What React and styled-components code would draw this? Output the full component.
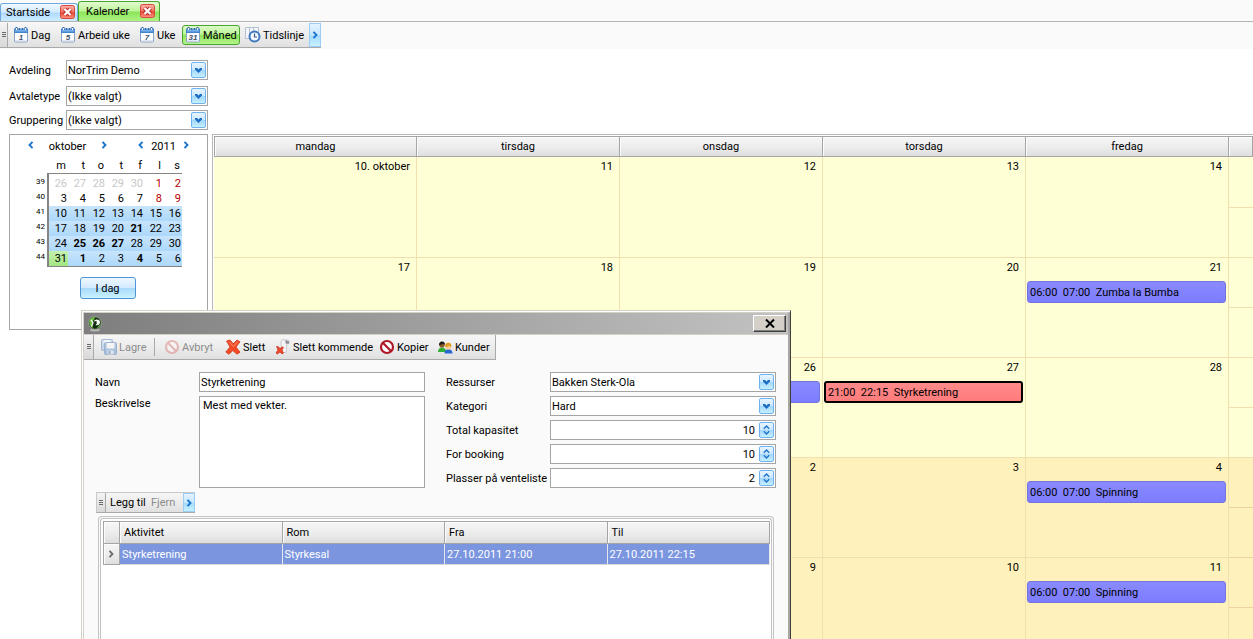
import React from "react";
import styled, { createGlobalStyle } from "styled-components";

const Global = createGlobalStyle`
  *, *::before, *::after { box-sizing: border-box; }
  html, body { margin: 0; background: #fff; }
  body, button, input, select, textarea, table {
    font-family: Roboto, "Liberation Sans", sans-serif;
    font-size: 11px;
    line-height: 15px;
    color: #000;
  }
  button { padding: 0; margin: 0; border: 0; background: none; white-space: nowrap; }
`;

const Page = styled.div`
  position: relative;
  height: 100vh;
  overflow: hidden;
  display: flex;
  flex-direction: column;
`;

/* ---------- tabs ---------- */
const TopArea = styled.header`
  background: #fafafa;
  height: 49px;
  flex: none;
`;
const TabStrip = styled.nav`
  display: flex;
  align-items: flex-end;
  height: 22px;
  border-bottom: 1px solid #b4b4b4;
`;
const Tab = styled.div`
  display: flex;
  align-items: center;
  justify-content: space-between;
  width: ${(p) => (p.$active ? "82px" : "78px")};
  height: ${(p) => (p.$active ? "20px" : "18px")};
  padding: ${(p) => (p.$active ? "0 4px 0 7px" : "0 2px 0 5px")};
  border: 1px solid ${(p) => (p.$active ? "#4aa52e" : "#6fa8dc")};
  border-bottom: 0;
  border-radius: 3px 3px 0 0;
  background: ${(p) =>
    p.$active
      ? "linear-gradient(#e2fbd0 0%, #bdf598 48%, #8ce45a 52%, #aef382 100%)"
      : "linear-gradient(#f2f9ff 0%, #d3eaff 45%, #b0dafc 55%, #cdeeff 100%)"};
`;
const TabClose = styled.button`
  display: flex;
  width: 15px;
  height: 15px;
`;

/* ---------- toolbars ---------- */
const Toolbar = styled.div`
  display: flex;
  align-items: stretch;
  width: max-content;
  height: ${(p) => p.$height || 25}px;
  border-right: 1px solid #a9a9a9;
  border-bottom: 1px solid #a9a9a9;
  background: linear-gradient(#f6f6f6 0%, #ececec 50%, #e0e0e0 100%);
`;
const MainToolbar = styled(Toolbar)`
  margin-top: 1px;
  border-right: 0;
`;
const Grip = styled.span`
  display: flex;
  align-items: center;
  justify-content: center;
  width: ${(p) => p.$width || 10}px;
  border-right: 1px solid #a9a9a9;
  background: linear-gradient(#f4f4f4, #d8d8d8);
`;
const ToolItems = styled.div`
  display: flex;
  align-items: center;
  gap: 2px;
  padding: 0 ${(p) => p.$pad}px;
`;
const ToolButton = styled.button`
  display: flex;
  align-items: center;
  gap: 2px;
  width: ${(p) => p.$width}px;
  height: 20px;
  padding-left: 2px;
  border: 1px solid ${(p) => (p.$active ? "#4aa52e" : "transparent")};
  border-radius: 3px;
  background: ${(p) =>
    p.$active ? "linear-gradient(#dcfac8 0%, #bdf598 45%, #8fe45e 52%, #b4f58c 100%)" : "none"};
  color: ${(p) => (p.disabled ? "#8c8c8c" : "#000")};
  svg { flex: none; opacity: ${(p) => (p.disabled ? 0.4 : 1)}; }
`;
const ToolSeparator = styled.span`
  width: 1px;
  height: 18px;
  margin-right: 4px;
  background: #a9a9a9;
`;
const MoreButton = styled.button`
  display: flex;
  align-items: center;
  justify-content: center;
  width: 12px;
  border: 1px solid #9ccdf6;
  background: linear-gradient(#e4f4ff 0%, #c6e6ff 50%, #a4dafd 54%, #c8f2ff 100%);
`;

/* ---------- form fields ---------- */
const FieldRow = styled.div`
  display: grid;
  grid-template-columns: ${(p) => p.$label}px 1fr;
  align-items: ${(p) => (p.$top ? "start" : "center")};
`;
const Label = styled.label`
  white-space: nowrap;
`;
const Control = styled.div`
  display: grid;
  grid-template-columns: 1fr 16px;
  align-items: center;
  height: 20px;
  border: 1px solid #a5a5a5;
  background: #fff;
`;
const fieldText = `
  grid-row: 1;
  width: 100%;
  height: 18px;
  margin: 0;
  padding: 1px 1px 0;
  border: 0;
  border-radius: 0;
  outline: 0;
  background: transparent;
  appearance: none;
`;
const Select = styled.select`
  ${fieldText}
  grid-column: 1 / 3;
`;
const NumberInput = styled.input`
  ${fieldText}
  grid-column: 1;
  padding-right: 4px;
  text-align: right;
  appearance: textfield;
  &::-webkit-inner-spin-button { display: none; }
`;
const FieldButton = styled.span`
  display: flex;
  align-items: center;
  justify-content: center;
  grid-row: 1;
  grid-column: 2;
  width: 15px;
  height: 16px;
  border: 1px solid #6fb2ee;
  border-radius: 2px;
  background: linear-gradient(#e8f5ff 0%, #cde7ff 48%, #a5d7fb 52%, #c6f0ff 100%);
  pointer-events: none;
`;
const TextInput = styled.input`
  width: 100%;
  height: 20px;
  padding: 0 1px;
  border: 1px solid #a5a5a5;
  border-radius: 0;
`;
const TextArea = styled.textarea`
  display: block;
  width: 100%;
  height: 92px;
  padding: 1px 3px;
  border: 1px solid #a5a5a5;
  resize: none;
`;

/* ---------- body ---------- */
const Main = styled.main`
  display: grid;
  grid-template-columns: 199px 1fr;
  gap: 4px;
  flex: 1;
  min-height: 0;
  padding-left: 9px;
`;
const Sidebar = styled.aside`
  padding-top: 11px;
`;
const Filters = styled.div`
  display: grid;
  gap: 4px;
`;
const FirstFilter = styled.div`
  padding-bottom: 2px;
`;
const DatePanel = styled.section`
  display: flex;
  flex-direction: column;
  align-items: center;
  height: 196px;
  margin-top: 4px;
  border: 1px solid #a5a5a5;
`;
const MonthNav = styled.div`
  display: flex;
  align-items: center;
  justify-content: space-between;
  width: 164px;
  height: 22px;
`;
const NavGroup = styled.div`
  display: flex;
  align-items: center;
  justify-content: space-between;
  width: ${(p) => p.$width}px;
`;
const NavButton = styled.button`
  display: flex;
  width: 8px;
  height: 10px;
`;
const MonthTable = styled.table`
  width: 156px;
  margin-right: 9px;
  border-collapse: separate;
  border-spacing: 0;
  table-layout: fixed;
  th, td { padding: 0; height: 15px; text-align: right; font-weight: 400; }
  thead th { height: 16px; padding-right: 2px; }
  thead th:first-child { width: 23px; }
`;
const WeekNo = styled.th`
  && {
    padding: ${(p) => (p.$first ? "4px" : "1px")} 2px 0 0;
    font-size: 8px;
    line-height: 10px;
    vertical-align: top;
    border-right: 2px solid #858585;
  }
`;
const Day = styled.td`
  && {
    height: ${(p) => (p.$first ? 18 : p.$last ? 16 : 15)}px;
    padding: ${(p) => (p.$first ? "2px" : "0")} 1px 0 0;
    color: ${(p) => (p.$kind === "out" ? "#c8c8c8" : p.$kind === "red" ? "#b80000" : "#000")};
    font-weight: ${(p) => (p.$bold ? 700 : 400)};
    background: ${(p) =>
      p.$kind === "today"
        ? "linear-gradient(#c6f0b0, #a2e682)"
        : p.$kind === "sel"
          ? "linear-gradient(#c8e4fc, #acd8fa)"
          : "none"};
    border-top: ${(p) => (p.$first ? "1px solid #858585" : "0")};
    border-bottom: ${(p) => (p.$last ? "1px solid #858585" : "0")};
  }
`;
const TodayButton = styled.button`
  width: 56px;
  height: 22px;
  margin: 10px 2px 0 0;
  border: 1px solid #4f95d8;
  border-radius: 3px;
  background: linear-gradient(#eef8ff 0%, #d3eaff 48%, #a9dafc 52%, #cbf3ff 100%);
`;

/* ---------- month view ---------- */
const MonthView = styled.section`
  margin-top: 85px;
  padding: 1px 0 0 1px;
  border-top: 1px solid #b8b8b8;
  border-left: 1px solid #b8b8b8;
`;
const WeekGrid = styled.div`
  display: grid;
  grid-template-columns: repeat(5, minmax(0, 1fr)) 24px;
`;
const DayHeader = styled.div`
  height: 21px;
  padding-top: 2px;
  text-align: center;
  border: 1px solid #a5a5a5;
  border-left-width: 0;
  box-shadow: inset 1px 1px #fcfcfc;
  background: linear-gradient(#f6f6f6 0%, #ececec 55%, #dedede 100%);
  &:first-child { border-left-width: 1px; }
`;
const DayCell = styled.div`
  height: ${(p) => (p.$tall ? 101 : 100)}px;
  padding: 2px 2px 0 1px;
  border-right: 1px solid #f2dfb0;
  border-bottom: 1px solid #f2dfb0;
  background: ${(p) => (p.$next ? "#fff1bb" : "#ffffd6")};
`;
const DayNumber = styled.div`
  padding-right: 4px;
  text-align: right;
`;
const Weekend = styled.div`
  display: grid;
  grid-template-rows: ${(p) => (p.$tall ? 51 : 50)}px 50px;
  div {
    border-bottom: 1px solid ${(p) => (p.$next ? "#ecd49c" : "#f2dfb0")};
    background: ${(p) => (p.$next ? "#fff1bb" : "#ffffd6")};
  }
`;
const EventCard = styled.button`
  display: block;
  width: 100%;
  height: 22px;
  margin-top: 6px;
  padding: 0 2px;
  text-align: left;
  white-space: pre;
  border: ${(p) => (p.$selected ? "2px solid #000" : "1px solid #7474e0")};
  border-radius: 3px;
  background: ${(p) =>
    p.$selected ? "linear-gradient(#ff8a8a, #ff7b7b)" : "linear-gradient(#8a8aff, #7c7cff)"};
`;

/* ---------- dialog ---------- */
const Dialog = styled.section`
  position: absolute;
  top: 310px;
  bottom: 0;
  left: 81px;
  width: 710px;
  display: flex;
  flex-direction: column;
  padding: 1px 0 0 1px;
  border-top: 1px solid #d4d0c8;
  border-left: 1px solid #d4d0c8;
  border-right: 1px solid #404040;
  background: #fff;
`;
const DialogFrame = styled.div`
  display: flex;
  flex-direction: column;
  flex: 1;
  min-height: 0;
  border-top: 1px solid #d4d0c8;
  border-left: 1px solid #d4d0c8;
  border-right: 2px solid #a8a6a0;
  background: #fafafa;
`;
const TitleBar = styled.header`
  display: flex;
  align-items: center;
  justify-content: space-between;
  flex: none;
  height: 22px;
  padding: 0 2px 0 4px;
  border-bottom: 1px solid #d4d0c8;
  background: linear-gradient(90deg, #7e7e7e, #c2c2c2);
`;
const CloseButton = styled.button`
  display: flex;
  align-items: center;
  justify-content: center;
  width: 33px;
  height: 17px;
  border: 1px solid #fff;
  border-right-color: #404040;
  border-bottom-color: #404040;
  box-shadow: inset -1px -1px #808080;
  background: #d4d0c8;
`;
const FormGrid = styled.div`
  display: grid;
  grid-template-columns: 330px 330px;
  column-gap: 21px;
  align-items: start;
  padding: 12px 0 0 11px;
`;
const FormColumn = styled.div`
  display: grid;
  gap: 4px;
`;
const SmallToolbar = styled(Toolbar)`
  flex: none;
  margin: 4px 0 0 12px;
  border-top: 1px solid #c8c8c8;
  border-left: 1px solid #c8c8c8;
  border-right: 0;
`;
const GridOuter = styled.div`
  flex: 1;
  min-height: 0;
  overflow: hidden;
  margin: 3px 14px 0;
  padding: 1px 1px 0;
  border: 1px solid #c4c4c4;
  border-bottom: 0;
  border-radius: 4px 4px 0 0;
`;
const GridInner = styled.div`
  height: 100%;
  padding: 2px 1px 0 2px;
  border: 1px solid #c4c4c4;
  border-bottom: 0;
  border-radius: 3px 3px 0 0;
  background: #fff;
`;
const ActivityTable = styled.table`
  width: 100%;
  border-collapse: separate;
  border-spacing: 0;
  table-layout: fixed;
  border-top: 1px solid #a5a5a5;
  border-left: 1px solid #a5a5a5;
  th {
    height: 22px;
    padding: 0 4px;
    text-align: left;
    font-weight: 400;
    border-right: 1px solid #a5a5a5;
    border-bottom: 1px solid #a5a5a5;
    box-shadow: inset 1px 1px #fcfcfc;
    background: linear-gradient(#f6f6f6 0%, #ececec 55%, #dedede 100%);
  }
  th:first-child { width: 16px; padding: 0 3px; }
  tbody th { height: 21px; }
  td {
    height: 21px;
    padding: 0 2px;
    color: #fff;
    background: #7b96df;
    border-right: 1px solid #e8e8e8;
    border-bottom: 1px solid #d8d8d8;
  }
`;

/* ---------- icons ---------- */
const Chevron = ({ left, color = "#1a74cc", size = 8 }) => (
  <svg width={size} height={size} viewBox="0 0 8 8" fill="none" stroke={color} strokeWidth="1.9">
    <path d={left ? "M5.5.8 2.500 4l3 3.200" : "M2.500.8l3 3.200-3 3.200"} />
  </svg>
);
const DropIcon = () => (
  <svg width="7" height="5" viewBox="0 0 7 5">
    <path d="M0 0h2l1.500 1.500L5 0h2v1.500L3.500 5 0 1.500z" fill="#1a6fc4" />
  </svg>
);
const SpinIcon = () => (
  <svg width="7" height="10" viewBox="0 0 7 10" fill="none" stroke="#1a74cc" strokeWidth="1.4">
    <path d="M.8 3.700 3.500 1l2.700 2.700M.8 6.300 3.500 9l2.700-2.700" />
  </svg>
);
const GripIcon = () => (
  <svg width="4" height="8" viewBox="0 0 4 8" stroke="#6a6a6a">
    <path d="M0 1.500h4M0 3.500h4M0 5.500h4" />
  </svg>
);
const RedCloseIcon = () => (
  <svg width="15" height="15" viewBox="0 0 15 15">
    <defs>
      <linearGradient id="redClose" x1="0" y1="0" x2="0" y2="1">
        <stop offset="0" stopColor="#ffb4a8" />
        <stop offset=".5" stopColor="#f07868" />
        <stop offset=".55" stopColor="#e84434" />
        <stop offset="1" stopColor="#ff9880" />
      </linearGradient>
    </defs>
    <rect x=".5" y=".5" width="14" height="13" rx="2" fill="url(#redClose)" stroke="#d84840" />
    <path d="M4.500 4l6 6M10.500 4l-6 6" stroke="#b03028" strokeWidth="4" />
    <path d="M4.500 4l6 6M10.500 4l-6 6" stroke="#fff" strokeWidth="2.200" />
  </svg>
);
const CalendarIcon = ({ day }) => (
  <svg width="16" height="16" viewBox="0 0 16 16">
    <rect x="1.500" y="2.500" width="13" height="12.500" rx="1" fill="#fff" stroke="#8aa4c8" />
    <path d="M1 1.500h14V6H1z" fill="#4484cc" />
    <path d="M2 2.500h12v2H2z" fill="#78b0ec" />
    <path d="M2.500 0h2v3h-2zM11.500 0h2v3h-2z" fill="#3868a8" />
    <path d="M3 1h1v2H3zM12 1h1v2h-1z" fill="#fff" />
    <path d="M6.500 1v2M9.500 1v2" stroke="#3868a8" />
    <path d="M2 14h12" stroke="#c4d2e4" />
    <text x="8" y="13" textAnchor="middle" fontSize="8" fontWeight="700" fontStyle="italic" fontFamily="Liberation Sans" fill="#44546c">
      {day}
    </text>
  </svg>
);
const TimelineIcon = () => (
  <svg width="16" height="16" viewBox="0 0 16 16">
    <path d="M.5.5h13v11H.5z" fill="#f2f5f9" stroke="#b4c2d2" />
    <path d="M4.500 1v10M8.500 1v5" stroke="#b4c2d2" />
    <circle cx="9.500" cy="9.500" r="5" fill="#f4f9ff" stroke="#3f78bd" strokeWidth="2" />
    <path d="M9.500 6.500v3.500h2.500" fill="none" stroke="#3f5f88" strokeWidth="1.200" />
  </svg>
);
const SaveIcon = () => (
  <svg width="16" height="16" viewBox="0 0 16 16">
    <rect x=".5" y=".5" width="11" height="11" rx="1" fill="#8cb6e4" stroke="#3468ac" />
    <rect x="2.500" y="1" width="7" height="4" fill="#fff" />
    <rect x="3.500" y="3.500" width="12" height="12" rx="1" fill="#4c88d4" stroke="#2c5c9c" />
    <rect x="5.500" y="4" width="8" height="5.500" fill="#fff" />
    <rect x="6.500" y="11.500" width="6" height="4" fill="#d8e4f2" />
    <rect x="7.500" y="12" width="2" height="3" fill="#2c5c9c" />
  </svg>
);
const ForbidIcon = ({ soft }) => (
  <svg width="16" height="16" viewBox="0 0 16 16" fill="none" stroke={soft ? "#d86868" : "#b01828"} strokeWidth="2.200">
    <circle cx="8" cy="8" r="6" fill="#fff" />
    <path d="M3.800 3.800l8.400 8.400" />
  </svg>
);
const DeleteIcon = () => (
  <svg width="16" height="16" viewBox="0 0 16 16">
    <path d="M1.500 2 5 1l3.200 3.800L12 1l3 1.800L11 8l4 5.200-3 2L7.800 11.500 4 15.300.8 13 5 8z" fill="#f44a28" stroke="#d03818" strokeWidth=".8" />
    <path d="M4 2.800 8.500 7.500 12.500 2.800" fill="none" stroke="#ff8c6c" strokeWidth="1" />
  </svg>
);
const DeleteNextIcon = () => (
  <svg width="16" height="16" viewBox="0 0 16 16">
    <path d="M6 2.500C6 1 7.500.5 9 .8l4 .4c1.500 0 1.800 2 .8 3l-2-.4-.6 9.500-4.700.7z" fill="#f4f4f4" stroke="#c0c0c0" strokeWidth=".8" />
    <path d="M10.500 1v3.500l3.500.2V2.500z" fill="#8a9098" />
    <path d="M1.500 7.500l2 .3 1.500 2 2-2 1.500.7L7 11l1.500 3L7 15l-2-2-2.500 2L1 14l2-3z" fill="#f04828" stroke="#b82010" strokeWidth=".6" />
  </svg>
);
const PeopleIcon = () => (
  <svg width="16" height="16" viewBox="0 0 16 16">
    <path d="M1 13c0-3 1.500-4.500 4-4.500S9 10 9 13z" fill="#30b038" />
    <circle cx="5" cy="6" r="2.600" fill="#8a5a28" />
    <path d="M2.200 6.500C1.700 3.500 3.300 2.500 5.200 2.500S8.300 4 7.800 6L6 4.800z" fill="#201c18" />
    <path d="M7.500 14.500c0-2.700 1.300-4.200 3.900-4.200s4.100 1.500 4.100 4.200z" fill="#2868d0" />
    <circle cx="11.300" cy="8" r="2.600" fill="#fcc890" />
    <path d="M8.500 8.500C7.700 5 9.300 3.800 11.400 3.800s3.700 1.700 2.800 4.700L12.500 6.500z" fill="#e09a20" />
  </svg>
);
const AppIcon = () => (
  <svg width="14" height="16" viewBox="0 0 14 16">
    <ellipse cx="7" cy="14" rx="5" ry="1.600" fill="#b4b4b4" />
    <circle cx="7" cy="7" r="6.300" fill="#142c10" stroke="#a8b8a0" strokeWidth=".8" />
    <path d="M1.500 4.500C3 2 5 1 7.500 1.200L4 6.500l1 5.500C2.500 11 .8 8 1.500 4.500z" fill="#6cc440" />
    <path d="M8.500 12c2-.4 3.600-1.800 4-4l-2 2z" fill="#6cc440" />
    <path d="M3 4l2 2.500-1.500 4" fill="none" stroke="#f2f8ee" strokeWidth="1.300" />
    <path d="M6 5c1.500-2.200 5.500-2 6 .8s-2 4-4.500 3.200L9 7.500z" fill="#f4faf0" />
    <circle cx="7.800" cy="6" r="1" fill="#142c10" />
  </svg>
);
const CrossIcon = () => (
  <svg width="10" height="9" viewBox="0 0 10 9" stroke="#000" strokeWidth="2">
    <path d="M1 .5l8 8M9 .5l-8 8" />
  </svg>
);

/* ---------- data ---------- */
const filters = [
  { id: "avdeling", label: "Avdeling", value: "NorTrim Demo" },
  { id: "avtaletype", label: "Avtaletype", value: "(Ikke valgt)" },
  { id: "gruppering", label: "Gruppering", value: "(Ikke valgt)" },
];
const miniWeeks = [
  [39, [26, 27, 28, 29, 30, 1, 2]],
  [40, [3, 4, 5, 6, 7, 8, 9]],
  [41, [10, 11, 12, 13, 14, 15, 16]],
  [42, [17, 18, 19, 20, 21, 22, 23]],
  [43, [24, 25, 26, 27, 28, 29, 30]],
  [44, [31, 1, 2, 3, 4, 5, 6]],
];
const boldDays = ["3-4", "4-1", "4-2", "4-3", "5-1", "5-4"];
const dayKind = (w, d) => {
  if (w === 0 && d < 5) return "out";
  if (w < 2) return d > 4 ? "red" : "plain";
  return w === 5 && d === 0 ? "today" : "sel";
};
const dayNames = ["mandag", "tirsdag", "onsdag", "torsdag", "fredag"];
const spinning = { text: "06:00  07:00  Spinning" };
const weeks = [
  [{ n: "10. oktober" }, { n: 11 }, { n: 12 }, { n: 13 }, { n: 14 }],
  [{ n: 17 }, { n: 18 }, { n: 19 }, { n: 20 }, { n: 21, event: { text: "06:00  07:00  Zumba la Bumba" } }],
  [
    { n: 24 },
    { n: 25 },
    { n: 26, event: spinning },
    { n: 27, event: { text: "21:00  22:15  Styrketrening", selected: true } },
    { n: 28 },
  ],
  [{ n: 31 }, { n: "1. november", next: true }, { n: 2, next: true }, { n: 3, next: true }, { n: 4, next: true, event: spinning }],
  [{ n: 7, next: true }, { n: 8, next: true }, { n: 9, next: true }, { n: 10, next: true }, { n: 11, next: true, event: spinning }],
];

const Dropdown = ({ id, value }) => (
  <Control>
    <Select id={id} defaultValue={value}>
      <option>{value}</option>
    </Select>
    <FieldButton><DropIcon /></FieldButton>
  </Control>
);
const Spinner = ({ id, value }) => (
  <Control>
    <NumberInput id={id} type="number" defaultValue={value} />
    <FieldButton><SpinIcon /></FieldButton>
  </Control>
);
const Filter = ({ id, label, value }) => (
  <FieldRow $label={57}>
    <Label htmlFor={id}>{label}</Label>
    <Dropdown id={id} value={value} />
  </FieldRow>
);

export default function App() {
  return (
    <Page>
      <Global />
      <TopArea>
        <TabStrip>
          <Tab>
            Startside
            <TabClose aria-label="Lukk Startside"><RedCloseIcon /></TabClose>
          </Tab>
          <Tab $active>
            Kalender
            <TabClose aria-label="Lukk Kalender"><RedCloseIcon /></TabClose>
          </Tab>
        </TabStrip>
        <MainToolbar>
          <Grip $width={8}><GripIcon /></Grip>
          <ToolItems $pad={2}>
            <ToolButton $width={45}><CalendarIcon day="1" />Dag</ToolButton>
            <ToolButton $width={77}><CalendarIcon day="5" />Arbeid uke</ToolButton>
            <ToolButton $width={44}><CalendarIcon day="7" />Uke</ToolButton>
            <ToolButton $width={58} $active><CalendarIcon day="31" />Måned</ToolButton>
            <ToolButton $width={65}><TimelineIcon />Tidslinje</ToolButton>
          </ToolItems>
          <MoreButton aria-label="Flere"><Chevron /></MoreButton>
        </MainToolbar>
      </TopArea>

      <Main>
        <Sidebar>
          <Filters>
            <FirstFilter><Filter {...filters[0]} /></FirstFilter>
            <Filter {...filters[1]} />
            <Filter {...filters[2]} />
          </Filters>
          <DatePanel>
            <MonthNav>
              <NavGroup $width={82}>
                <NavButton aria-label="Forrige måned"><Chevron left /></NavButton>
                oktober
                <NavButton aria-label="Neste måned"><Chevron /></NavButton>
              </NavGroup>
              <NavGroup $width={54}>
                <NavButton aria-label="Forrige år"><Chevron left /></NavButton>
                2011
                <NavButton aria-label="Neste år"><Chevron /></NavButton>
              </NavGroup>
            </MonthNav>
            <MonthTable>
              <thead>
                <tr>
                  <th />
                  {["m", "t", "o", "t", "f", "l", "s"].map((d, i) => <th key={i}>{d}</th>)}
                </tr>
              </thead>
              <tbody>
                {miniWeeks.map(([no, days], w) => (
                  <tr key={no}>
                    <WeekNo $first={w === 0}>{no}</WeekNo>
                    {days.map((n, d) => (
                      <Day key={d} $kind={dayKind(w, d)} $bold={boldDays.includes(`${w}-${d}`)} $first={w === 0} $last={w === 5}>
                        {n}
                      </Day>
                    ))}
                  </tr>
                ))}
              </tbody>
            </MonthTable>
            <TodayButton>I dag</TodayButton>
          </DatePanel>
        </Sidebar>

        <MonthView>
          <WeekGrid>
            {dayNames.map((n) => <DayHeader key={n}>{n}</DayHeader>)}
            <DayHeader />
          </WeekGrid>
          {weeks.map((week, w) => (
            <WeekGrid key={w}>
              {week.map((d) => (
                <DayCell key={d.n} $next={d.next} $tall={w === 0}>
                  <DayNumber>{d.n}</DayNumber>
                  {d.event && <EventCard $selected={d.event.selected}>{d.event.text}</EventCard>}
                </DayCell>
              ))}
              <Weekend $next={w > 2} $tall={w === 0}><div /><div /></Weekend>
            </WeekGrid>
          ))}
        </MonthView>
      </Main>

      <Dialog role="dialog" aria-label="Styrketrening">
        <DialogFrame>
          <TitleBar>
            <AppIcon />
            <CloseButton aria-label="Lukk"><CrossIcon /></CloseButton>
          </TitleBar>
          <Toolbar>
            <Grip><GripIcon /></Grip>
            <ToolItems $pad={4}>
              <ToolButton $width={54} disabled><SaveIcon />Lagre</ToolButton>
              <ToolSeparator />
              <ToolButton $width={59} disabled><ForbidIcon soft />Avbryt</ToolButton>
              <ToolButton $width={48}><DeleteIcon />Slett</ToolButton>
              <ToolButton $width={102}><DeleteNextIcon />Slett kommende</ToolButton>
              <ToolButton $width={56}><ForbidIcon />Kopier</ToolButton>
              <ToolButton $width={57}><PeopleIcon />Kunder</ToolButton>
            </ToolItems>
          </Toolbar>
          <FormGrid>
            <FormColumn>
              <FieldRow $label={104}>
                <Label htmlFor="navn">Navn</Label>
                <TextInput id="navn" defaultValue="Styrketrening" />
              </FieldRow>
              <FieldRow $label={104} $top>
                <Label htmlFor="beskrivelse">Beskrivelse</Label>
                <TextArea id="beskrivelse" defaultValue="Mest med vekter." />
              </FieldRow>
            </FormColumn>
            <FormColumn>
              <FieldRow $label={104}>
                <Label htmlFor="ressurser">Ressurser</Label>
                <Dropdown id="ressurser" value="Bakken Sterk-Ola" />
              </FieldRow>
              <FieldRow $label={104}>
                <Label htmlFor="kategori">Kategori</Label>
                <Dropdown id="kategori" value="Hard" />
              </FieldRow>
              <FieldRow $label={104}>
                <Label htmlFor="kapasitet">Total kapasitet</Label>
                <Spinner id="kapasitet" value={10} />
              </FieldRow>
              <FieldRow $label={104}>
                <Label htmlFor="booking">For booking</Label>
                <Spinner id="booking" value={10} />
              </FieldRow>
              <FieldRow $label={104}>
                <Label htmlFor="venteliste">Plasser på venteliste</Label>
                <Spinner id="venteliste" value={2} />
              </FieldRow>
            </FormColumn>
          </FormGrid>
          <SmallToolbar $height={21}>
            <Grip $width={9}><GripIcon /></Grip>
            <ToolItems $pad={1}>
              <ToolButton $width={39}>Legg til</ToolButton>
              <ToolButton $width={34} disabled>Fjern</ToolButton>
            </ToolItems>
            <MoreButton aria-label="Flere"><Chevron /></MoreButton>
          </SmallToolbar>
          <GridOuter>
            <GridInner>
              <ActivityTable>
                <thead>
                  <tr>
                    <th />
                    <th>Aktivitet</th>
                    <th>Rom</th>
                    <th>Fra</th>
                    <th>Til</th>
                  </tr>
                </thead>
                <tbody>
                  <tr>
                    <th><Chevron color="#707070" /></th>
                    <td>Styrketrening</td>
                    <td>Styrkesal</td>
                    <td>27.10.2011 21:00</td>
                    <td>27.10.2011 22:15</td>
                  </tr>
                </tbody>
              </ActivityTable>
            </GridInner>
          </GridOuter>
        </DialogFrame>
      </Dialog>
    </Page>
  );
}
